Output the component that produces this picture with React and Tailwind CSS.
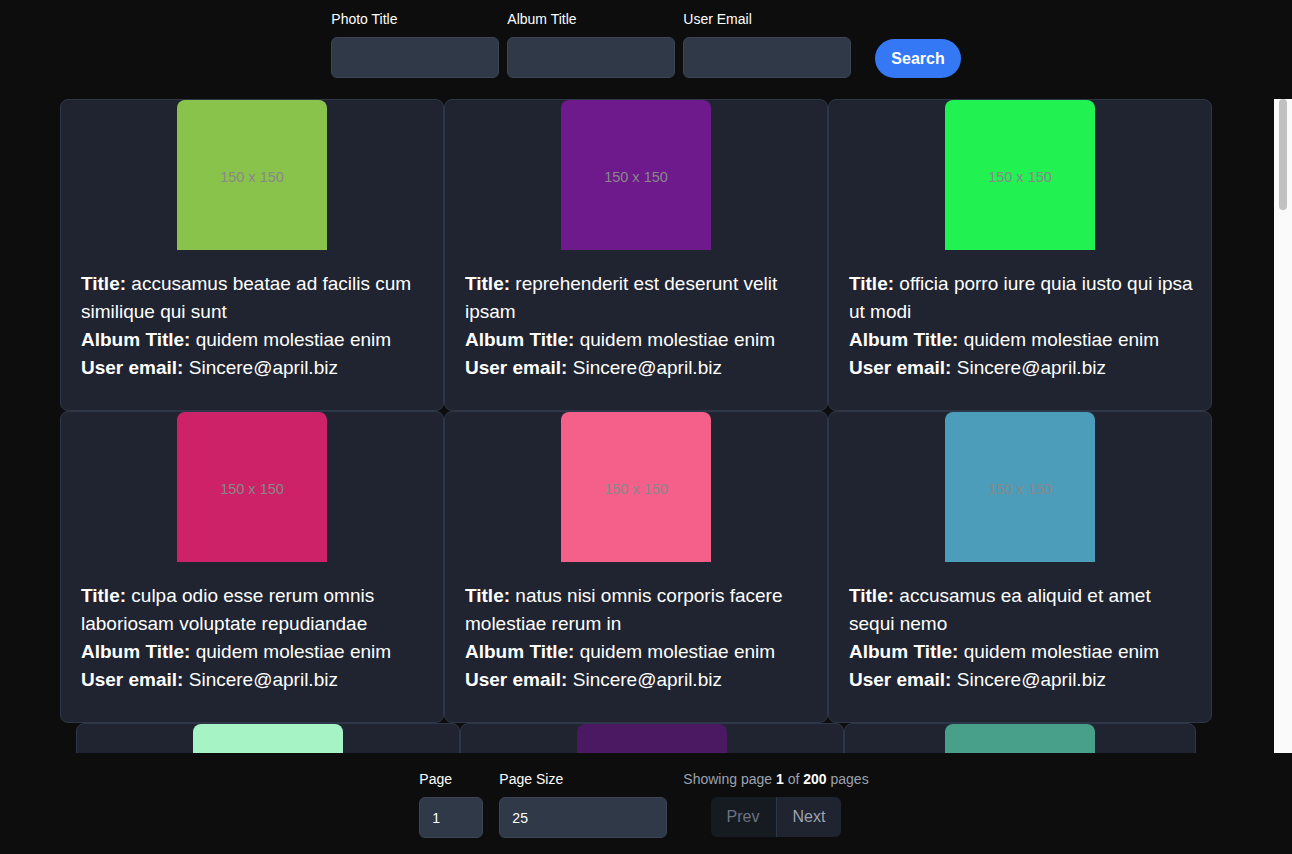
import React from "react";

const ALBUM = "quidem molestiae enim";
const EMAIL = "Sincere@april.biz";

const photos = [
  ["accusamus beatae ad facilis cum similique qui sunt", "#89c34b"],
  ["reprehenderit est deserunt velit ipsam", "#6f1a8c"],
  ["officia porro iure quia iusto qui ipsa ut modi", "#22f152"],
  ["culpa odio esse rerum omnis laboriosam voluptate repudiandae", "#cd2268"],
  ["natus nisi omnis corporis facere molestiae rerum in", "#f5608b"],
  ["accusamus ea aliquid et amet sequi nemo", "#4c9dba"],
  ["officia delectus consequatur vero aut veniam explicabo molestias", "#a6f4c6"],
  ["aut porro officiis laborum odit ea laudantium corporis", "#4b1962"],
  ["qui eius qui autem sed", "#48a08b"],
  ["beatae et provident et ut vel", "#7a1016"],
  ["nihil at amet non hic quia qui", "#22e0a0"],
  ["mollitia soluta ut rerum eos aliquam consequatur perspiciatis maiores", "#62b0cc"],
];

function Card({ title, color, narrow }) {
  return (
    <div
      className={`${narrow ? "w-[352px]" : "w-[384px]"} h-[312px] shrink-0 bg-[#1f2430] border border-[#2e3747] rounded-lg overflow-hidden`}
    >
      <div className="flex justify-center">
        <div
          className="w-[150px] h-[150px] pt-[6px] rounded-t-lg flex items-center justify-center text-[14.5px] text-[#888888]"
          style={{ backgroundColor: color }}
        >
          150 x 150
        </div>
      </div>
      <div className="pl-5 pr-3 mt-5 text-[19px] leading-7 text-white">
        <p>
          <strong>Title:</strong> {title}
        </p>
        <p>
          <strong>Album Title:</strong> {ALBUM}
        </p>
        <p>
          <strong>User email:</strong> {EMAIL}
        </p>
      </div>
    </div>
  );
}

function Field({ label, className, value }) {
  return (
    <div className="flex flex-col">
      <label className="text-sm leading-5 text-white mb-2">{label}</label>
      <input
        readOnly
        value={value || ""}
        className={`${className} h-[41px] rounded-md bg-[#2f3948] border border-[#3b4555] px-3 text-sm text-white outline-none`}
      />
    </div>
  );
}

export default function App() {
  const rows = [];
  for (let i = 0; i < photos.length; i += 3) rows.push(photos.slice(i, i + 3));

  return (
    <div className="h-screen flex flex-col bg-[#0d0d0d] font-['Liberation_Sans',Arial,sans-serif] overflow-hidden">
      <div className="flex justify-center items-end gap-2 pt-[9px] pb-[21px]">
        <Field label="Photo Title" className="w-[168px]" />
        <Field label="Album Title" className="w-[168px]" />
        <Field label="User Email" className="w-[168px]" />
        <button className="ml-4 h-[39px] px-4 rounded-full bg-[#3478f6] text-white font-bold">
          Search
        </button>
      </div>

      <div className="flex-1 min-h-0 flex">
        <div className="flex-1 min-w-0 overflow-hidden flex flex-col items-center pr-[2px]">
          {rows.map((row, r) => (
            <div key={r} className="flex shrink-0">
              {row.map(([title, color], c) => (
                <Card key={c} title={title} color={color} narrow={r >= 2 && c === 2} />
              ))}
            </div>
          ))}
        </div>
        <div className="w-[18px] bg-[#fafafa] flex justify-center">
          <div className="w-2 h-[111px] rounded-full bg-[#c1c1c1]" />
        </div>
      </div>

      <div className="flex justify-center items-start gap-4 py-4 pr-1">
        <div className="flex flex-col">
          <label className="text-sm leading-5 text-white mb-2">Page</label>
          <input
            readOnly
            value="1"
            className="w-[64px] h-[41px] rounded-md bg-[#2f3948] border border-[#3b4555] px-3 text-sm text-white outline-none"
          />
        </div>
        <Field label="Page Size" className="w-[168px]" value="25" />
        <div className="flex flex-col items-center">
          <p className="text-sm leading-5 text-[#9ca3af] mb-2">
            Showing page <strong className="text-white">1</strong> of{" "}
            <strong className="text-white">200</strong> pages
          </p>
          <div className="flex rounded-md overflow-hidden">
            <button className="h-10 px-4 bg-[#161b22] text-[#6b7280]">Prev</button>
            <button className="h-10 px-4 bg-[#1f2430] text-[#9ca3af] border-l border-[#2e3747]">
              Next
            </button>
          </div>
        </div>
      </div>
    </div>
  );
}
